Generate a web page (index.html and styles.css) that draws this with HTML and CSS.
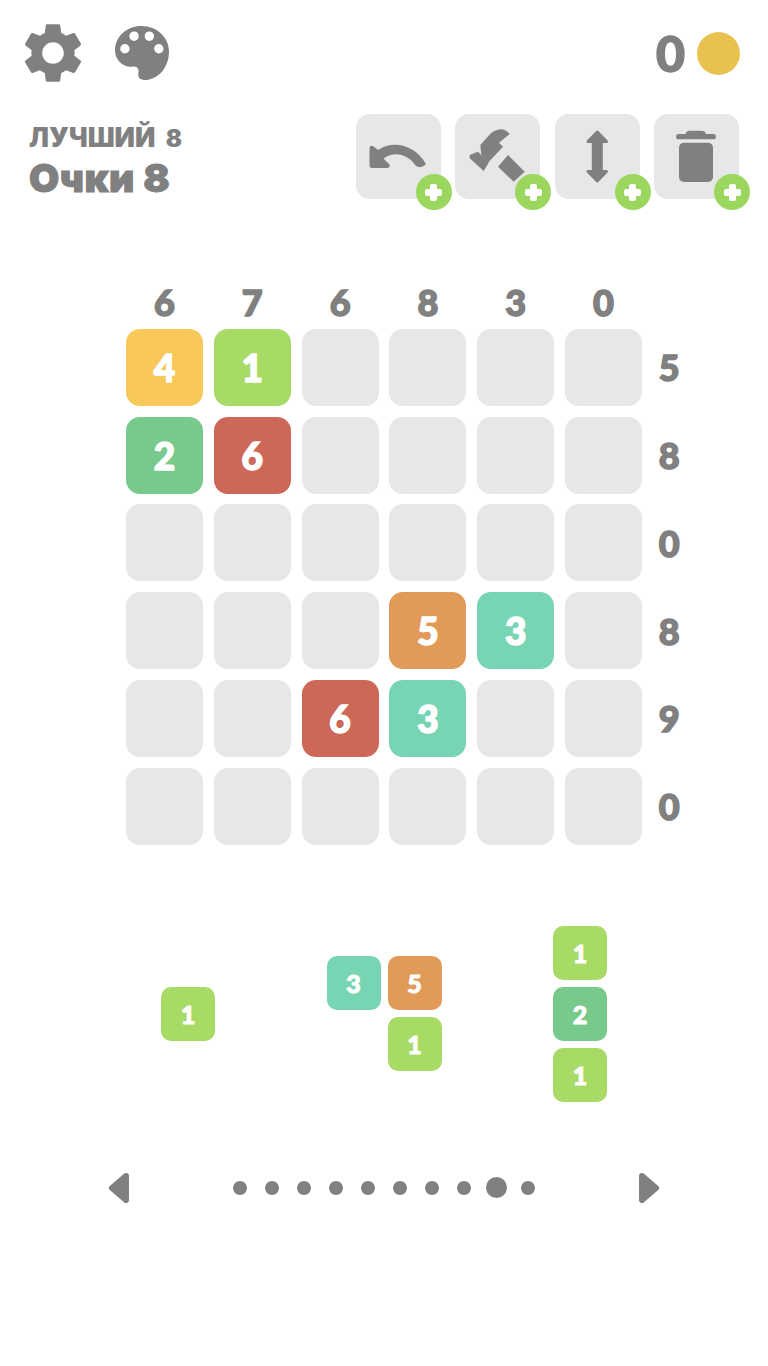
FILE: index.html
```html
<!DOCTYPE html>
<html lang="ru">
<head>
    <meta charset="UTF-8">
    <meta name="viewport" content="width=device-width, initial-scale=1.0">
    <title>Puzzle</title>
    <link rel="stylesheet" href="styles.css">
</head>
<body>
    <div class="top-bar">
        <div class="top-icons">
            <svg class="gear" viewBox="2.6 2 18.8 20"><path d="M19.14 12.94c.04-.3.06-.61.06-.94 0-.32-.02-.64-.07-.94l2.03-1.58c.18-.14.23-.41.12-.61l-1.92-3.32c-.12-.22-.37-.29-.59-.22l-2.39.96c-.5-.38-1.03-.7-1.62-.94l-.36-2.54c-.04-.24-.24-.41-.48-.41h-3.84c-.24 0-.43.17-.47.41l-.36 2.54c-.59.24-1.13.57-1.62.94l-2.39-.96c-.22-.08-.47 0-.59.22L2.74 8.87c-.12.21-.08.47.12.61l2.03 1.58c-.05.3-.09.63-.09.94s.02.64.07.94l-2.03 1.58c-.18.14-.23.41-.12.61l1.92 3.32c.12.22.37.29.59.22l2.39-.96c.5.38 1.03.7 1.62.94l.36 2.54c.05.24.24.41.48.41h3.84c.24 0 .44-.17.47-.41l.36-2.54c.59-.24 1.13-.56 1.62-.94l2.39.96c.22.08.47 0 .59-.22l1.92-3.32c.12-.22.07-.47-.12-.61l-2.01-1.58zM12 15.6c-1.98 0-3.6-1.62-3.6-3.6s1.62-3.6 3.6-3.6 3.6 1.62 3.6 3.6-1.62 3.6-3.6 3.6z"/></svg>
            <svg class="palette" viewBox="0 0 53 53">
                <path d="M26 0C41 0 53 11 53 25C53 41 42 53 29 53C24 53 22 50 23 46C24 42 21 39 17 40C8 41 0 33 0 24C0 10 12 0 26 0Z"/>
                <circle class="hole" cx="18.7" cy="10" r="4.6"/>
                <circle class="hole" cx="33.7" cy="10" r="4.6"/>
                <circle class="hole" cx="9.7" cy="22.3" r="4.6"/>
                <circle class="hole" cx="43" cy="22.3" r="4.6"/>
            </svg>
        </div>
        <div class="coins">
            <span class="coin-count">0</span>
            <span class="coin"></span>
        </div>
    </div>

    <div class="score-row">
        <div class="score">
            <div class="best">ЛУЧШИЙ <span class="best-value">8</span></div>
            <div class="points">Очки 8</div>
        </div>
        <div class="tools">
            <div class="tool">
                <svg viewBox="0 0 85 85"><path d="M13.5 34V51Q13.5 54 16 54H32Q35 52 33 50L27.5 44.5C38 37 51 39 60 52Q66 55 70 50C60 32 38 25 22 36L17 32Q14 31 13.5 34Z"/></svg>
                <span class="plus"></span>
            </div>
            <div class="tool">
                <svg viewBox="0 0 85 85"><path d="M25.3 31L36.3 18.7Q48 11 54.7 20L44 28.7L48 32.7L33 48.7L26.3 41Z"/><path d="M14.7 41L23 37.7L33.7 48.7L28.7 57L14.7 44.3Z"/><path d="M53 41L69.7 57.7L58.7 67.7L43 52.7Z"/></svg>
                <span class="plus"></span>
            </div>
            <div class="tool">
                <svg viewBox="0 0 85 85"><path class="rounded" d="M42.3 18L33 27.5H38.3V57.5H33L42.3 67L51.5 57.5H46.3V27.5H51.5Z"/></svg>
                <span class="plus"></span>
            </div>
            <div class="tool">
                <svg viewBox="0 0 85 85"><path d="M31.7 20Q32 16.7 36 16.7H47Q51.5 16.7 51.7 20H60Q62 20 62 22.6Q62 25.3 60 25.3H24Q22 25.3 22 22.6Q22 20 24 20Z"/><rect x="25" y="28.7" width="34" height="39.3" rx="5"/></svg>
                <span class="plus"></span>
            </div>
        </div>
    </div>

    <div class="board">
        <div class="hint">6</div><div class="hint">7</div><div class="hint">6</div><div class="hint">8</div><div class="hint">3</div><div class="hint">0</div><div></div>

        <div class="cell yellow">4</div><div class="cell lime">1</div><div class="cell"></div><div class="cell"></div><div class="cell"></div><div class="cell"></div><div class="hint">5</div>
        <div class="cell green">2</div><div class="cell red">6</div><div class="cell"></div><div class="cell"></div><div class="cell"></div><div class="cell"></div><div class="hint">8</div>
        <div class="cell"></div><div class="cell"></div><div class="cell"></div><div class="cell"></div><div class="cell"></div><div class="cell"></div><div class="hint">0</div>
        <div class="cell"></div><div class="cell"></div><div class="cell"></div><div class="cell orange">5</div><div class="cell teal">3</div><div class="cell"></div><div class="hint">8</div>
        <div class="cell"></div><div class="cell"></div><div class="cell red">6</div><div class="cell teal">3</div><div class="cell"></div><div class="cell"></div><div class="hint">9</div>
        <div class="cell"></div><div class="cell"></div><div class="cell"></div><div class="cell"></div><div class="cell"></div><div class="cell"></div><div class="hint">0</div>
    </div>

    <div class="pieces">
        <div class="piece">
            <div class="block lime">1</div>
        </div>
        <div class="piece two-cols">
            <div class="block teal">3</div>
            <div class="block orange">5</div>
            <div></div>
            <div class="block lime">1</div>
        </div>
        <div class="piece">
            <div class="block lime">1</div>
            <div class="block green">2</div>
            <div class="block lime">1</div>
        </div>
    </div>

    <div class="pager">
        <svg class="arrow" viewBox="0 0 22 32"><path class="rounded-arrow" d="M18 4L4 16L18 28Z"/></svg>
        <div class="dots">
            <span class="dot"></span>
            <span class="dot"></span>
            <span class="dot"></span>
            <span class="dot"></span>
            <span class="dot"></span>
            <span class="dot"></span>
            <span class="dot"></span>
            <span class="dot"></span>
            <span class="dot active"></span>
            <span class="dot"></span>
        </div>
        <svg class="arrow" viewBox="0 0 22 32"><path class="rounded-arrow" d="M4 4L18 16L4 28Z"/></svg>
    </div>
</body>
</html>
```

FILE: styles.css
```css
body {
    font-family: Lato, "Noto Sans", sans-serif;
    font-weight: 900;
    margin: 0;
    padding: 0;
    background-color: #fff;
    color: #808080;
    fill: #808080;
}

.top-bar {
    display: flex;
    justify-content: space-between;
    align-items: center;
    height: 60px;
    padding: 23px 28px 0 24px;
}
.top-icons {
    display: flex;
    align-items: center;
    gap: 33px;
}
.gear {
    width: 58px;
    height: 60px;
}
.palette {
    width: 54px;
    height: 54px;
}
.hole {
    fill: #fff;
}
.coins {
    display: flex;
    align-items: center;
    gap: 12px;
}
.coin-count {
    font-size: 50px;
    line-height: 60px;
    -webkit-text-stroke: 1.5px #808080;
}
.coin {
    width: 43px;
    height: 43px;
    border-radius: 50%;
    background-color: #e8c24f;
}

.score-row {
    display: flex;
    justify-content: space-between;
    align-items: center;
    height: 85px;
    margin-top: 31px;
    padding: 0 29px;
}
.score {
    font-family: Inter, "Noto Sans", sans-serif;
}
.best {
    font-size: 26.5px;
    line-height: 30px;
    margin-top: 8px;
}
.best-value {
    margin-left: 5px;
    font-size: 24px;
}
.points {
    font-size: 39px;
    line-height: 44px;
    margin-top: 2px;
    letter-spacing: 0.5px;
    -webkit-text-stroke: 1px #808080;
}
.tools {
    display: flex;
    gap: 14.5px;
}
.tool {
    position: relative;
    width: 85px;
    height: 85px;
    border-radius: 14px;
    background-color: #e7e7e7;
}
.tool svg {
    display: block;
    width: 85px;
    height: 85px;
}
.plus {
    position: absolute;
    right: -11px;
    bottom: -11px;
    width: 36px;
    height: 36px;
    border-radius: 50%;
    background-color: #9bd65f;
}
.plus::before,
.plus::after {
    content: "";
    position: absolute;
    border-radius: 2px;
    background-color: #fff;
}
.plus::before {
    left: 9.5px;
    top: 14.5px;
    width: 17px;
    height: 7px;
}
.plus::after {
    left: 14.5px;
    top: 9.5px;
    width: 7px;
    height: 17px;
}
.rounded {
    stroke: #808080;
    stroke-width: 3;
    stroke-linejoin: round;
}
.rounded-arrow {
    stroke: #808080;
    stroke-width: 6;
    stroke-linejoin: round;
}

.board {
    display: grid;
    grid-template-columns: repeat(6, 77px) 33px;
    grid-template-rows: 32px repeat(6, 77px);
    gap: 10.8px;
    margin: 87px 0 0 126px;
}
.hint {
    display: flex;
    align-items: center;
    justify-content: center;
    font-size: 36px;
    -webkit-text-stroke: 1.5px #808080;
}
.cell {
    display: flex;
    align-items: center;
    justify-content: center;
    border-radius: 14px;
    background-color: #e7e7e7;
    color: #fff;
    font-size: 37px;
    -webkit-text-stroke: 1.5px #fff;
}

.yellow { background-color: #f9c85a; }
.lime { background-color: #a8da66; }
.green { background-color: #78c98c; }
.red { background-color: #cd6858; }
.teal { background-color: #78d5b3; }
.orange { background-color: #e29a58; }

.pieces {
    display: grid;
    grid-template-columns: repeat(3, 196px);
    align-items: center;
    justify-items: center;
    height: 190px;
    margin: 74px 0 0 90px;
}
.piece {
    display: grid;
    grid-template-columns: 54px;
    grid-auto-rows: 54px;
    gap: 7px;
}
.two-cols {
    grid-template-columns: 54px 54px;
}
.block {
    display: flex;
    align-items: center;
    justify-content: center;
    border-radius: 10px;
    color: #fff;
    font-size: 25px;
    -webkit-text-stroke: 1px #fff;
}

.pager {
    display: flex;
    justify-content: space-between;
    align-items: center;
    height: 32px;
    margin-top: 63px;
    padding: 0 108px;
}
.arrow {
    width: 22px;
    height: 32px;
}
.dots {
    display: flex;
    align-items: center;
    gap: 18px;
}
.dot {
    width: 14px;
    height: 14px;
    border-radius: 50%;
    background-color: #808080;
}
.dot.active {
    width: 21px;
    height: 21px;
    margin: 0 -3.5px;
}
```
